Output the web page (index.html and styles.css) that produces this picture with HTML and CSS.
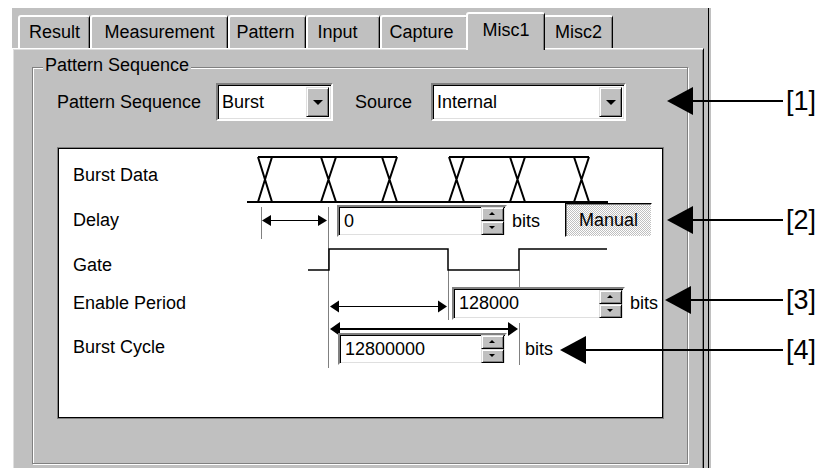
FILE: index.html
```html
<!DOCTYPE html>
<html>
<head>
  <title>Misc1 - Pattern Sequence</title>
  <link rel="stylesheet" href="styles.css">
</head>
<body>
<div class="screen">

  <div class="window">
    <div class="tabs">
      <div class="tab tab-result">Result</div>
      <div class="tab tab-measurement">Measurement</div>
      <div class="tab tab-pattern">Pattern</div>
      <div class="tab tab-input">Input</div>
      <div class="tab tab-capture">Capture</div>
      <div class="tab tab-misc1 active">Misc1</div>
      <div class="tab tab-misc2">Misc2</div>
    </div>

    <div class="panel">
      <div class="group">
        <span class="group-title">Pattern Sequence</span>

        <div class="row">
          <span class="row-label seq-label">Pattern Sequence</span>
          <div class="combo combo-seq"><span class="combo-text">Burst</span><span class="drop"></span></div>
          <span class="row-label source-label">Source</span>
          <div class="combo combo-src"><span class="combo-text">Internal</span><span class="drop"></span></div>
        </div>

        <div class="diagram">
          <div class="labels">
            <span>Burst Data</span>
            <span>Delay</span>
            <span>Gate</span>
            <span>Enable Period</span>
            <span>Burst Cycle</span>
          </div>

          <svg class="timing" width="603" height="268" viewBox="0 0 603 268">
            <!-- burst data eye -->
            <g stroke="#000" stroke-width="2" fill="none">
              <path d="M199 8H338M390 8H530M188 53H549"/>
              <path d="M199 8L213 53M213 8L199 53M262 8L277 53M277 8L262 53M323 8L338 53M338 8L323 53"/>
              <path d="M390 8L405 53M405 8L390 53M451 8L466 53M466 8L451 53M515 8L530 53M530 8L515 53"/>
            </g>
            <!-- guide lines -->
            <path stroke="#808080" stroke-width="1" d="M202.5 58V90M269.5 58V219M389.5 121V171M460.5 121V138M460.5 174V216"/>
            <!-- gate -->
            <path stroke="#000" stroke-width="1.5" fill="none" d="M249 121H270V100H389V121H460V100H548"/>
            <!-- delay -->
            <path stroke="#000" stroke-width="1" d="M210 71.5H262"/>
            <polygon points="203,71.5 212,66 212,77"/>
            <polygon points="268,71.5 259,66 259,77"/>
            <!-- enable period -->
            <path stroke="#000" stroke-width="1" d="M279 157.5H380"/>
            <polygon points="271,157.5 280,151.5 280,163.5"/>
            <polygon points="388,157.5 379,151.5 379,163.5"/>
            <!-- burst cycle -->
            <path stroke="#000" stroke-width="2" d="M279 180H451"/>
            <polygon points="271,180 281,173 281,187"/>
            <polygon points="459,180 449,173 449,187"/>
          </svg>

          <div class="field field-delay">
            <div class="num num-delay"><span class="num-text">0</span><span class="spin"><i class="up"></i><i class="down"></i></span></div>
            <span class="unit">bits</span>
          </div>
          <div class="manual">Manual</div>

          <div class="field field-enable">
            <div class="num num-enable"><span class="num-text">128000</span><span class="spin"><i class="up"></i><i class="down"></i></span></div>
            <span class="unit">bits</span>
          </div>

          <div class="field field-cycle">
            <div class="num num-cycle"><span class="num-text">12800000</span><span class="spin"><i class="up"></i><i class="down"></i></span></div>
            <span class="unit unit-cycle">bits</span>
          </div>
        </div>
      </div>
    </div>
  </div>

  <div class="callout callout-1">
    <svg width="116" height="28"><polygon points="0,14 26,0 26,28"/><rect x="25" y="13" width="91" height="2"/></svg>
    <span>[1]</span>
  </div>
  <div class="callout callout-2">
    <svg width="116" height="28"><polygon points="0,14 26,0 26,28"/><rect x="25" y="13" width="91" height="2"/></svg>
    <span>[2]</span>
  </div>
  <div class="callout callout-3">
    <svg width="118" height="28"><polygon points="0,14 26,0 26,28"/><rect x="25" y="13" width="93" height="2"/></svg>
    <span>[3]</span>
  </div>
  <div class="callout callout-4">
    <svg width="223" height="28"><polygon points="0,14 26,0 26,28"/><rect x="25" y="13" width="198" height="2"/></svg>
    <span>[4]</span>
  </div>

</div>
</body>
</html>
```

FILE: styles.css
```css
body {
  margin: 0;
  background: #fff;
  font-family: "Liberation Sans", Arial, sans-serif;
  font-size: 18px;
  color: #000;
}
.screen {
  position: relative;
  width: 825px;
  height: 468px;
  overflow: hidden;
}

/* window */
.window {
  margin: 8px 0 0 12px;
  width: 699px;
  height: 470px;
  padding-right: 7px;
  box-sizing: border-box;
  background-color: #c0c0c0;
  background-image: linear-gradient(to right, transparent 696px, #000 696px, #000 697px, transparent 697px);
}

/* tabs */
.tabs {
  display: flex;
  align-items: flex-end;
  height: 40px;
  padding-left: 6px;
}
.tab {
  position: relative;
  height: 33px;
  box-sizing: border-box;
  padding: 5px 0 0 0;
  line-height: 20px;
  text-align: center;
  background: #c0c0c0;
  border-style: solid;
  border-width: 2px 1px 0 2px;
  border-color: #fff #000 transparent #fff;
  border-radius: 3px 3px 0 0;
  box-shadow: inset -1px 0 0 #808080;
  white-space: nowrap;
}
.tab-result { width: 72px; }
.tab-measurement { width: 138px; }
.tab-pattern { width: 78px; padding-right: 4px; }
.tab-input { width: 74px; padding-right: 12px; }
.tab-capture { width: 88px; padding-right: 6px; }
.tab-misc1 { width: 79px; }
.tab-misc2 { width: 70px; }
.tab.active {
  z-index: 2;
  height: 38px;
  padding-top: 6px;
  margin: 0 -2px -2px -2px;
}

/* tab page */
.panel {
  position: relative;
  z-index: 1;
  height: 430px;
  border-top: 1px solid #fff;
  border-left: 1px solid #fff;
  border-right: 1px solid #000;
  box-shadow: inset 1px 1px 0 #dfdfdf, inset -1px 0 0 #808080;
  padding: 18px 15px 0 19px;
}

.group {
  position: relative;
  height: 397px;
  box-sizing: border-box;
  border: 1px solid #808080;
  box-shadow: 1px 1px 0 #fff, inset 1px 1px 0 #fff;
  padding: 15px 0 0 24px;
}
.group-title {
  position: absolute;
  top: -13px;
  left: 10px;
  padding: 0 2px;
  line-height: 20px;
  background: #c0c0c0;
}

.row {
  display: flex;
  align-items: center;
  height: 38px;
}
.seq-label { width: 159px; }
.source-label { width: 76px; margin-left: 22px; }

.combo {
  display: flex;
  align-items: stretch;
  height: 38px;
  box-sizing: border-box;
  background: #fff;
  border: 2px solid;
  border-color: #808080 #fff #fff #808080;
  box-shadow: inset 1px 1px 0 #000, inset -1px -1px 0 #dfdfdf;
}
.combo-seq { width: 117px; }
.combo-src { width: 195px; }
.combo-text {
  flex: 1;
  padding-left: 4px;
  line-height: 34px;
}
.drop {
  position: relative;
  width: 23px;
  margin: 2px;
  box-sizing: border-box;
  background: #c0c0c0;
  border: 1px solid;
  border-color: #dfdfdf #000 #000 #dfdfdf;
  box-shadow: inset 1px 1px 0 #fff, inset -1px -1px 0 #808080;
}
.drop::after {
  content: "";
  position: absolute;
  left: 6px;
  top: 12px;
  border-style: solid;
  border-width: 5px 5px 0 5px;
  border-color: #000 transparent transparent transparent;
}

/* timing diagram */
.diagram {
  position: relative;
  width: 605px;
  height: 270px;
  margin: 27px 0 0 1px;
  box-sizing: border-box;
  background: #fff;
  border: 1px solid #000;
  box-shadow: 0 0 0 1px #808080;
}
.labels {
  display: grid;
  grid-template-rows: 45px 45px 38px 44px 20px;
  padding: 16px 0 0 14px;
  line-height: 20px;
}
.timing {
  position: absolute;
  left: 0;
  top: 0;
}

.field {
  position: absolute;
  display: flex;
  align-items: center;
}
.field-delay { left: 278px; top: 56px; }
.field-enable { left: 393px; top: 138px; }
.field-cycle { left: 279px; top: 184px; }

.num {
  display: flex;
  align-items: center;
  box-sizing: border-box;
  height: 32px;
  background: #fff;
  border: 2px solid;
  border-color: #808080 #fff #fff #808080;
  box-shadow: inset 1px 1px 0 #000, inset -1px -1px 0 #dfdfdf;
}
.num-delay { width: 170px; }
.num-enable { width: 173px; height: 33px; }
.num-cycle { width: 169px; }
.num-text {
  flex: 1;
  padding-left: 5px;
}
.spin {
  display: flex;
  flex-direction: column;
  width: 23px;
  height: 28px;
  margin-right: 1px;
}
.spin i {
  position: relative;
  flex: 1;
  box-sizing: border-box;
  background: #c0c0c0;
  border: 1px solid;
  border-color: #dfdfdf #000 #000 #dfdfdf;
  box-shadow: inset 1px 1px 0 #fff, inset -1px -1px 0 #808080;
}
.spin i::after {
  content: "";
  position: absolute;
  left: 7px;
  top: 4px;
  border-style: solid;
  border-color: transparent;
}
.spin .up::after {
  border-width: 0 3px 3px 3px;
  border-bottom-color: #000;
}
.spin .down::after {
  border-width: 3px 3px 0 3px;
  border-top-color: #000;
}
.unit { margin-left: 5px; }
.unit-cycle { margin-left: 18px; }

.manual {
  position: absolute;
  left: 506px;
  top: 54px;
  width: 87px;
  height: 34px;
  box-sizing: border-box;
  line-height: 32px;
  text-align: center;
  border: 1px solid;
  border-color: #000 #fff #fff #000;
  box-shadow: inset 1px 1px 0 #808080;
  background: repeating-conic-gradient(#fff 0 25%, #c0c0c0 0 50%) 0 0 / 2px 2px;
}

/* callouts */
.callout {
  position: absolute;
  z-index: 5;
  display: flex;
  align-items: center;
  height: 28px;
  white-space: nowrap;
}
.callout svg {
  display: block;
  flex-shrink: 0;
}
.callout span {
  margin-left: 3px;
  font-size: 27px;
  line-height: 28px;
}
.callout-1 { left: 667px; top: 87px; }
.callout-2 { left: 667px; top: 206px; }
.callout-3 { left: 665px; top: 286px; }
.callout-4 { left: 560px; top: 336px; }
```
